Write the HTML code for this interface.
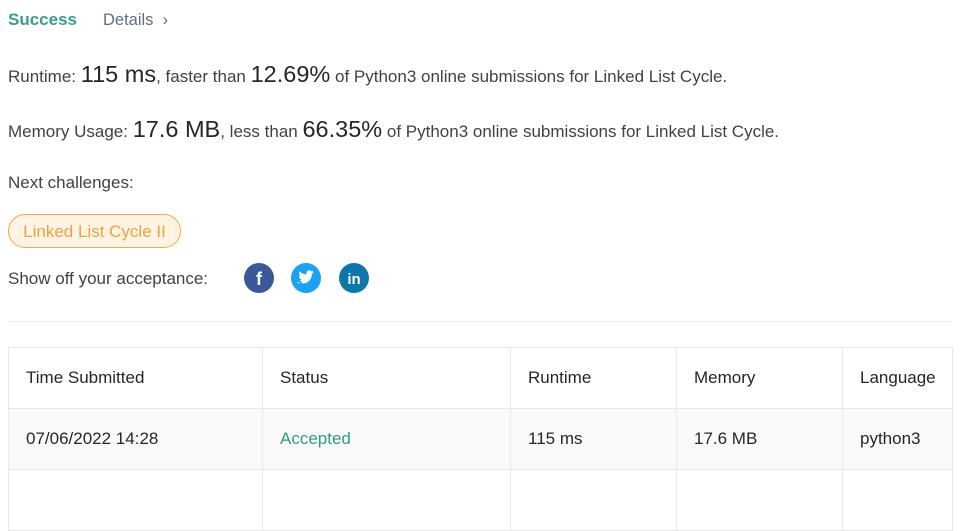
<!DOCTYPE html>
<html><head><style>
body{margin:0;background:#fff;font-family:"Liberation Sans",sans-serif;color:#333;width:963px;height:476px;overflow:hidden;position:relative}
.a{position:absolute;white-space:nowrap}
.s{font-size:17px;color:#424242}
.b{font-size:23.5px;color:#262626}
table{position:absolute;left:8px;top:347px;border-collapse:collapse;font-size:17px;color:#262626;table-layout:fixed;width:944px}
td{border:1px solid #e8e8e8;padding:0 0 0 17px;height:60px;vertical-align:middle;overflow:hidden;white-space:nowrap}
tr.g td{background:#f9f9f9}
</style></head><body>
<div class="a" style="left:8px;top:10px;font-size:17px;font-weight:bold;color:#3a9e8a">Success</div>
<div class="a" style="left:103px;top:11px;font-size:16.5px;color:#607080">Details&nbsp;&nbsp;›</div>
<div class="a s" style="left:8px;top:61px"><span>Runtime: </span><span class="b">115 ms</span>, faster than <span class="b">12.69%</span> of Python3 online submissions for Linked List Cycle.</div>
<div class="a s" style="left:8px;top:116px">Memory Usage: <span class="b">17.6 MB</span>, less than <span class="b">66.35%</span> of Python3 online submissions for Linked List Cycle.</div>
<div class="a s" style="left:8px;top:173px">Next challenges:</div>
<div class="a" style="left:8px;top:214px;width:171px;height:32px;border:1px solid #f5a840;border-radius:17px;background:#fff3e3;color:#f0a040;font-size:17px;text-align:center;line-height:33px">Linked List Cycle II</div>
<div class="a s" style="left:8px;top:269px">Show off your acceptance:</div>
<svg class="a" style="left:244px;top:263px" width="130" height="30">
<circle cx="15" cy="15" r="15" fill="#3b5998"/>
<text x="15" y="22" font-family="Liberation Sans" font-weight="bold" font-size="18" fill="#fff" text-anchor="middle">f</text>
<circle cx="62" cy="15" r="15" fill="#1da1f2"/>
<path d="M54 19c3 2 8 2 11-1 2-2 3-5 3-7l2-2-2 .5 1.5-2-2 .8c-2-2-5-1-5 2v1c-3 0-5-1-7-3-1 2 0 4 1 5l-1.5-.3c0 2 1 3 3 4h-2c1 2 2 2 3 2-2 1-4 1.5-6 1z" fill="#fff"/>
<circle cx="110" cy="15" r="15" fill="#0e76a8"/>
<text x="110" y="21" font-family="Liberation Sans" font-weight="bold" font-size="15" fill="#fff" text-anchor="middle">in</text>
</svg>
<div class="a" style="left:8px;top:321px;width:944px;height:1px;background:#eee"></div>
<table>
<colgroup><col style="width:254px"><col style="width:248px"><col style="width:166px"><col style="width:166px"><col style="width:110px"></colgroup>
<tr><td>Time Submitted</td><td>Status</td><td>Runtime</td><td>Memory</td><td>Language</td></tr>
<tr class="g"><td>07/06/2022 14:28</td><td style="color:#2e9b85">Accepted</td><td>115 ms</td><td>17.6 MB</td><td>python3</td></tr>
<tr><td></td><td></td><td></td><td></td><td></td></tr>
</table>
</body></html>
